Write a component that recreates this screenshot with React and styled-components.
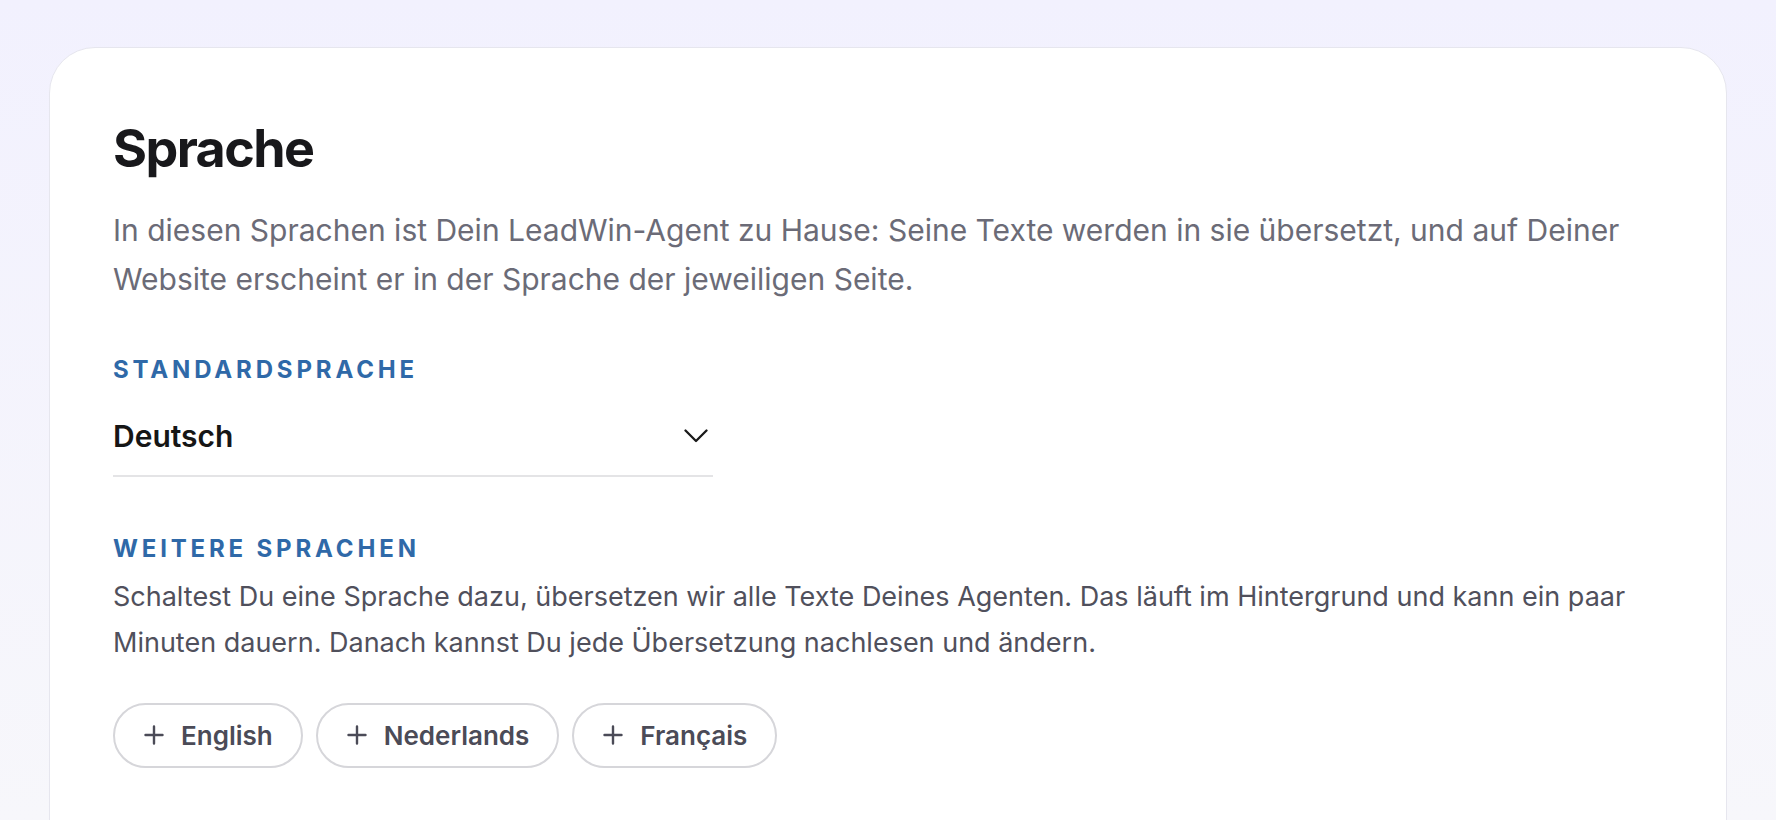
import styled, { createGlobalStyle } from 'styled-components';

const GlobalStyle = createGlobalStyle`
	html, body {
		margin: 0;
		padding: 0;
		height: 100%;
		overflow: hidden;
	}

	body {
		font-family: Inter, "Noto Sans", "Liberation Sans", sans-serif;
		background: linear-gradient(180deg, #f2f1fe 0%, #f7f7fb 100%);
	}
`;

const Page = styled.div`
	height: 100vh;
	box-sizing: border-box;
	padding: 47px 49px 0;
`;

const Card = styled.section`
	box-sizing: border-box;
	min-height: 900px;
	background-color: #fff;
	border: 1px solid #e6e6ee;
	border-radius: 46px;
	padding: 75px 63px 80px;
`;

const Title = styled.h1`
	margin: 0;
	font-size: 52px;
	line-height: 1;
	font-weight: 700;
	letter-spacing: -0.03em;
	color: #18181b;
`;

const Lead = styled.p`
	margin: 31px 0 0;
	font-size: 30px;
	line-height: 49px;
	color: #6b6b77;
`;

const Label = styled.div`
	margin-top: ${({ $top }) => $top}px;
	font-size: 24px;
	line-height: 28.8px;
	font-weight: 700;
	letter-spacing: 0.16em;
	text-transform: uppercase;
	color: #2f69a8;
`;

const Select = styled.div`
	width: 600px;
	box-sizing: border-box;
	margin-top: 12px;
	padding: 19px 5px 19px 0;
	display: flex;
	align-items: center;
	justify-content: space-between;
	border-bottom: 2px solid #e4e4e6;
	cursor: pointer;

	span {
		font-size: 30px;
		line-height: 40px;
		font-weight: 600;
		color: #161616;
	}

	svg {
		display: block;
	}
`;

const Hint = styled.p`
	margin: 10px 0 0;
	font-size: 27px;
	line-height: 46px;
	color: #50505c;
`;

const Chips = styled.div`
	margin-top: 37px;
	display: flex;
	gap: 13px;
`;

const Chip = styled.button`
	height: 65px;
	box-sizing: border-box;
	display: inline-flex;
	align-items: center;
	gap: 17px;
	padding: 0 28px 0 29px;
	background-color: #fff;
	border: 2px solid #d6d6da;
	border-radius: 999px;
	font-family: inherit;
	font-size: 26px;
	font-weight: 600;
	color: #4b4b57;
	cursor: pointer;

	svg {
		display: block;
		flex-shrink: 0;
	}
`;

const Chevron = () => (
	<svg width="24" height="14" viewBox="0 0 24 14" fill="none">
		<path d="M1.5 1.5 L12 12 L22.5 1.5" stroke="#1a1a1a" strokeWidth="2.3" strokeLinecap="round" strokeLinejoin="round" />
	</svg>
);

const Plus = () => (
	<svg width="20" height="20" viewBox="0 0 20 20" fill="none">
		<path d="M10 1.5 V18.5 M1.5 10 H18.5" stroke="#4b4b57" strokeWidth="2.4" strokeLinecap="round" />
	</svg>
);

const languages = ['English', 'Nederlands', 'Français'];

export default function App() {
	return (
		<>
			<GlobalStyle />
			<Page>
				<Card>
					<Title>Sprache</Title>
					<Lead>
						In diesen Sprachen ist Dein LeadWin-Agent zu Hause: Seine Texte werden in sie übersetzt, und auf Deiner
						Website erscheint er in der Sprache der jeweiligen Seite.
					</Lead>

					<Label $top={52}>Standardsprache</Label>
					<Select>
						<span>Deutsch</span>
						<Chevron />
					</Select>

					<Label $top={58}>Weitere Sprachen</Label>
					<Hint>
						Schaltest Du eine Sprache dazu, übersetzen wir alle Texte Deines Agenten. Das läuft im Hintergrund und kann
						ein paar Minuten dauern. Danach kannst Du jede Übersetzung nachlesen und ändern.
					</Hint>

					<Chips>
						{languages.map((lang) => (
							<Chip key={lang}>
								<Plus />
								{lang}
							</Chip>
						))}
					</Chips>
				</Card>
			</Page>
		</>
	);
}
